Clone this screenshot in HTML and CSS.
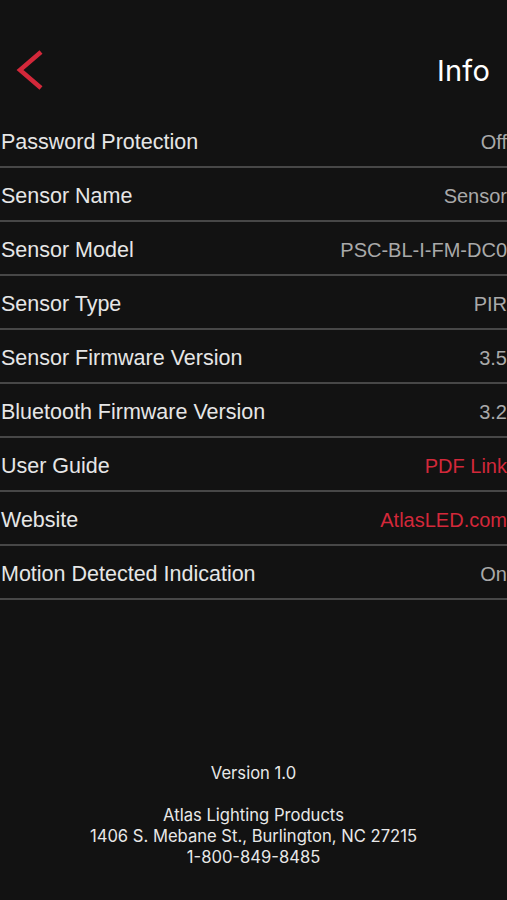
FILE: index.html
```html
<!DOCTYPE html>
<html>
<head>
<meta charset="utf-8">
<link rel="stylesheet" href="styles.css">
</head>
<body>
<div class="screen">
  <header class="header">
    <svg class="back" width="40" height="50" viewBox="0 0 40 50">
      <polyline points="31,7 10,25 31,43" fill="none" stroke="#d3283a" stroke-width="4.5" stroke-linecap="butt" stroke-linejoin="miter"/>
    </svg>
    <h1 class="title">Info</h1>
  </header>
  <ul class="list">
    <li class="row"><span class="label">Password Protection</span><span class="value">Off</span></li>
    <li class="row"><span class="label">Sensor Name</span><span class="value">Sensor</span></li>
    <li class="row"><span class="label">Sensor Model</span><span class="value">PSC-BL-I-FM-DC0</span></li>
    <li class="row"><span class="label">Sensor Type</span><span class="value">PIR</span></li>
    <li class="row"><span class="label">Sensor Firmware Version</span><span class="value">3.5</span></li>
    <li class="row"><span class="label">Bluetooth Firmware Version</span><span class="value">3.2</span></li>
    <li class="row"><span class="label">User Guide</span><span class="value link">PDF Link</span></li>
    <li class="row"><span class="label">Website</span><span class="value link">AtlasLED.com</span></li>
    <li class="row"><span class="label">Motion Detected Indication</span><span class="value">On</span></li>
  </ul>
  <footer class="footer">
    <p class="version">Version 1.0</p>
    <p class="address">Atlas Lighting Products<br>1406 S. Mebane St., Burlington, NC 27215<br>1-800-849-8485</p>
  </footer>
</div>
</body>
</html>
```
FILE: styles.css
```css
html, body {
  margin: 0;
  padding: 0;
  background: #121212;
}
.screen {
  width: 507px;
  min-height: 900px;
  display: flex;
  flex-direction: column;
  background: #121212;
  overflow: hidden;
}
.header {
  height: 114px;
  display: flex;
  align-items: center;
  justify-content: space-between;
  padding: 26px 17px 0 10px;
  box-sizing: border-box;
}
.back {
  display: block;
}
.title {
  margin: 0;
  font-family: Inter, "Liberation Sans", sans-serif;
  font-weight: 400;
  font-size: 29px;
  color: #ffffff;
  letter-spacing: 0.2px;
}
.list {
  list-style: none;
  margin: 0;
  padding: 0;
}
.row {
  height: 52px;
  border-bottom: 2px solid #474747;
  display: flex;
  align-items: center;
  justify-content: space-between;
  padding: 0 0 0 1px;
  white-space: nowrap;
  overflow: hidden;
}
.label {
  font-family: "Liberation Sans", Arial, sans-serif;
  font-size: 21.5px;
  color: #e6e6e6;
  margin-top: 5px;
}
.value {
  font-family: "Liberation Sans", Arial, sans-serif;
  font-size: 20px;
  color: #a9a9a9;
  margin-top: 5px;
}
.value.link {
  color: #d3283a;
}
.footer {
  margin-top: auto;
  padding-bottom: 32px;
  text-align: center;
  font-family: Inter, "Liberation Sans", sans-serif;
  font-size: 16.6px;
  line-height: 21px;
  color: #e8e8e8;
}
.version {
  margin: 0 0 21px;
}
.address {
  margin: 0;
}
```
